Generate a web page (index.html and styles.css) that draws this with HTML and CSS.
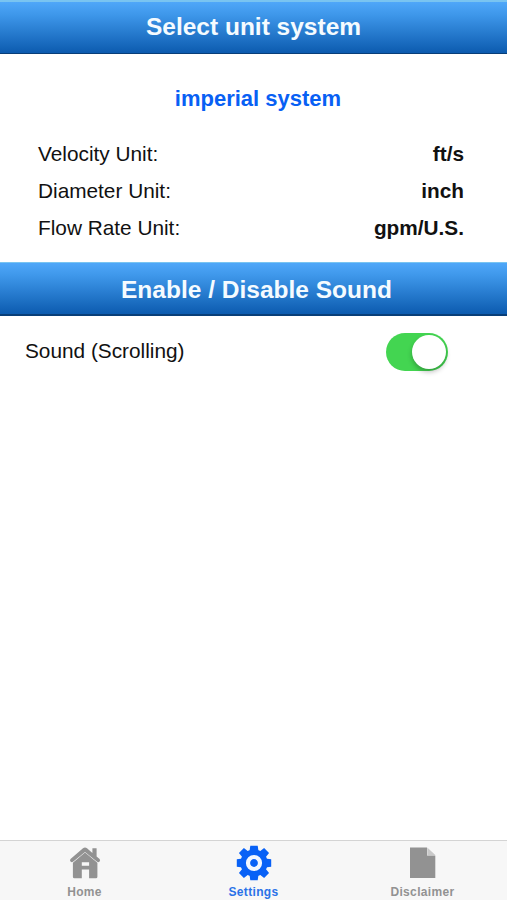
FILE: index.html
```html
<!DOCTYPE html>
<html lang="en">
<head>
<meta charset="utf-8">
<title>Settings</title>
<link rel="stylesheet" href="styles.css">
</head>
<body>
<main class="screen">
  <h1 class="banner">Select unit system</h1>
  <section class="units">
    <h2 class="system">imperial system</h2>
    <dl class="unit-list">
      <div class="unit-row"><dt>Velocity Unit:</dt><dd>ft/s</dd></div>
      <div class="unit-row"><dt>Diameter Unit:</dt><dd>inch</dd></div>
      <div class="unit-row"><dt>Flow Rate Unit:</dt><dd>gpm/U.S.</dd></div>
    </dl>
  </section>
  <h1 class="banner banner-sound">Enable / Disable Sound</h1>
  <section class="sound">
    <span class="sound-label">Sound (Scrolling)</span>
    <span class="switch" role="switch" aria-checked="true" aria-label="Sound"><span class="knob"></span></span>
  </section>
  <nav class="tabs">
    <a class="tab">
      <svg class="icon" viewBox="0 0 36 36">
        <path fill="#929292" d="M16 3.2q2-1.5 4 0L25.4 8V3.2h4.2v8.3l3 2.6q1 1.2 0 2.4-1.2 1.4-2.5.3L18 7 6 16.8q-1.3 1.1-2.5-.3-1-1.3 0-2.4Z"/>
        <path fill="#929292" fill-rule="evenodd" d="M18 7.6 30.4 17.8v14q0 1.5-1.5 1.5h-6.8V24.5h-7.3v8.8H7.4q-1.5 0-1.5-1.5v-14ZM14.8 17.3v3.4h7.3v-3.4Z"/>
      </svg>
      <span>Home</span>
    </a>
    <a class="tab tab-active">
      <svg class="icon" viewBox="-18 -18 36 36">
        <g fill="#0861f6">
          <circle r="13.6"/>
          <path d="M-3.7-17.2h7.4L4.6-11H-4.6ZM-3.7 17.2h7.4L4.6 11H-4.6ZM-17.2-3.7v7.4L-11 4.6V-4.6ZM17.2-3.7v7.4L11 4.6V-4.6Z"/>
          <path transform="rotate(45)" d="M-3.5-17.8h7L4.3-11H-4.3ZM-3.5 17.8h7L4.3 11H-4.3ZM-17.8-3.5v7L-11 4.3V-4.3ZM17.8-3.5v7L11 4.3V-4.3Z"/>
        </g>
        <circle r="6" fill="none" stroke="#f2f7ff" stroke-width="4.2"/>
      </svg>
      <span>Settings</span>
    </a>
    <a class="tab">
      <svg class="icon" viewBox="0 0 36 36">
        <path fill="#929292" d="M5 2.5H22V10.5H30.3V33H5Z"/>
        <path fill="#c9c9c9" d="M22.3 2.5 30.3 10H22.3Z"/>
      </svg>
      <span>Disclaimer</span>
    </a>
  </nav>
</main>
</body>
</html>
```
FILE: styles.css
```css
* { box-sizing: border-box; }
body {
  margin: 0;
  background: #fff;
  color: #111;
  font-family: "Liberation Sans", Arial, sans-serif;
}
.screen {
  display: flex;
  flex-direction: column;
  height: 900px;
}
h1, h2, dl, dd { margin: 0; }
.banner {
  display: flex;
  justify-content: center;
  align-items: center;
  flex: none;
  height: 54px;
  padding-bottom: 2px;
  background: linear-gradient(#4fa7f9, #3e97ea 25%, #0c5baf);
  border-top: 2px solid #79c4f1;
  border-bottom: 1px solid #083e78;
  color: #f5fbff;
  font-size: 24.5px;
  line-height: 28px;
}
.banner-sound {
  padding: 2px 0 0 6px;
  border-top-width: 1px;
  border-bottom-width: 2px;
}
.units {
  flex: none;
  height: 208px;
  padding: 32px 43px 0 38px;
}
.system {
  margin-left: 14px;
  text-align: center;
  color: #0860f4;
  font-size: 22px;
  line-height: 26px;
}
.unit-list { margin-top: 23px; }
.unit-row {
  display: flex;
  justify-content: space-between;
  height: 37px;
  font-size: 20.8px;
  line-height: 37px;
}
.unit-row dd { font-weight: bold; }
.sound {
  display: flex;
  justify-content: space-between;
  flex: none;
  height: 70px;
  padding: 17px 59px 0 25px;
  font-size: 20.8px;
}
.sound-label { line-height: 36px; }
.switch {
  display: flex;
  justify-content: flex-end;
  width: 62px;
  height: 38px;
  padding: 2px;
  border-radius: 19px;
  background: #43d551;
}
.knob {
  width: 34px;
  height: 34px;
  border-radius: 50%;
  background: #fff;
  box-shadow: 0 3px 5px rgba(0, 0, 0, 0.25);
}
.tabs {
  display: flex;
  flex: none;
  height: 60px;
  margin-top: auto;
  border-top: 1px solid #d4d4d4;
  background: #f7f7f7;
}
.tab {
  display: flex;
  flex: 1;
  flex-direction: column;
  align-items: center;
  padding-top: 4px;
  color: #929292;
  font-size: 12px;
  font-weight: bold;
  line-height: 14px;
  letter-spacing: 0.35px;
}
.tab-active { color: #2a72e8; }
.icon { width: 36px; height: 36px; margin-bottom: 4px; }
```
